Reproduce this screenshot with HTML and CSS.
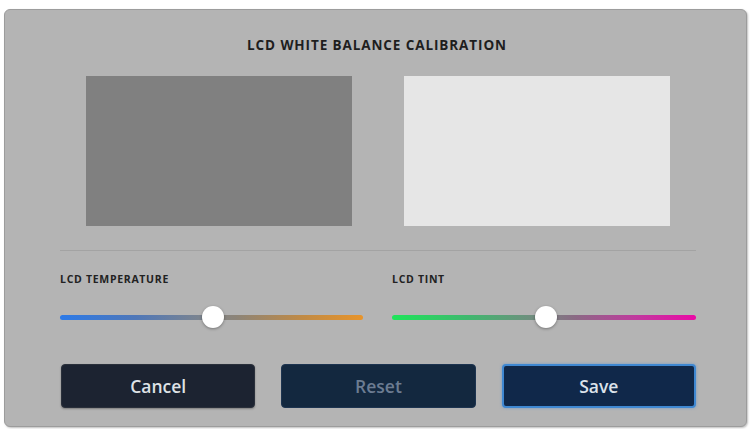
FILE: index.html
```
<!DOCTYPE html>
<html lang="en">
<head>
<meta charset="utf-8">
<title>LCD White Balance Calibration</title>
<link rel="stylesheet" href="styles.css">
</head>
<body>
<div class="panel">
  <h1 class="title">LCD WHITE BALANCE CALIBRATION</h1>
  <div class="swatches">
    <div class="swatch swatch-gray"></div>
    <div class="swatch swatch-white"></div>
  </div>
  <div class="divider"></div>
  <div class="controls">
    <div class="control">
      <div class="label">LCD TEMPERATURE</div>
      <div class="slider">
        <div class="track track-temp"></div>
        <div class="thumb" style="left: 50.5%"></div>
      </div>
    </div>
    <div class="control">
      <div class="label">LCD TINT</div>
      <div class="slider">
        <div class="track track-tint"></div>
        <div class="thumb" style="left: 50.6%"></div>
      </div>
    </div>
  </div>
  <div class="buttons">
    <button class="btn btn-cancel">Cancel</button>
    <button class="btn btn-reset">Reset</button>
    <button class="btn btn-save">Save</button>
  </div>
</div>
</body>
</html>
```
FILE: styles.css
```
* { box-sizing: border-box; }
html, body { margin: 0; padding: 0; background: #ffffff; }
body {
  font-family: "Open Sans", "Noto Sans", "DejaVu Sans", sans-serif;
  width: 751px;
  height: 429px;
  overflow: hidden;
}
.panel {
  margin: 9px 0 0 4px;
  width: 743px;
  height: 418px;
  background: #b4b4b4;
  border: 1px solid #9c9c9c;
  border-radius: 6px;
  box-shadow: 1px 1px 2px rgba(0,0,0,0.25);
  padding: 25px 50px 0 55px;
  display: flex;
  flex-direction: column;
}
.title {
  margin: 0;
  font-size: 13.5px;
  line-height: 20px;
  font-weight: 700;
  letter-spacing: 0.9px;
  color: #1e1e1e;
  text-align: center;
  padding-right: 2px;
}
.swatches {
  margin-top: 21px;
  display: grid;
  grid-template-columns: 266px 266px;
  column-gap: 52px;
  padding-left: 26px;
}
.swatch { height: 150px; }
.swatch-gray { background: #808080; }
.swatch-white { background: #e6e6e6; }
.divider {
  margin-top: 24px;
  height: 1px;
  background: #a3a3a3;
  width: 636px;
}
.controls {
  margin-top: 21px;
  display: grid;
  grid-template-columns: 303px 304px;
  column-gap: 29px;
}
.label {
  font-size: 10.5px;
  line-height: 14px;
  font-weight: 700;
  color: #222;
  letter-spacing: 0.7px;
}
.slider {
  position: relative;
  margin-top: 20px;
  height: 22px;
  display: flex;
  align-items: center;
}
.track {
  width: 100%;
  height: 5px;
  border-radius: 3px;
}
.track-temp {
  background: linear-gradient(to right, #2c7ae8 0%, #4f77b8 25%, #7f858c 48%, #8c8478 58%, #c08a45 80%, #e8942a 100%);
}
.track-tint {
  background: linear-gradient(to right, #1fe55a 0%, #3fb86e 25%, #748a80 48%, #8a6a84 60%, #c03a9e 80%, #ea0aa6 100%);
}
.thumb {
  position: absolute;
  top: 0;
  width: 22px;
  height: 22px;
  margin-left: -11px;
  border-radius: 50%;
  background: #ffffff;
  box-shadow: 0 1px 3px rgba(0,0,0,0.35);
}
.buttons {
  margin-top: 36px;
  display: grid;
  grid-template-columns: repeat(3, 1fr);
  column-gap: 26px;
  width: 636px;
  padding-left: 1px;
}
.btn {
  height: 44px;
  border-radius: 4px;
  font-family: "Open Sans", "Noto Sans", sans-serif;
  font-size: 17.5px;
  font-weight: 560;
  border: 1px solid transparent;
  padding: 0;
}
.btn-cancel {
  background: #1c2331;
  border-color: #2a303b;
  color: #dfe2e6;
  box-shadow: 0 1px 2px rgba(0,0,0,0.3);
}
.btn-reset {
  background: #13283f;
  border-color: #1d3450;
  color: #6c7c92;
}
.btn-save {
  background: #10284a;
  border: 2px solid #3f88d2;
  color: #dde3ea;
  font-weight: 620;
  box-shadow: 0 0 3px rgba(70,140,220,0.6);
}
```
